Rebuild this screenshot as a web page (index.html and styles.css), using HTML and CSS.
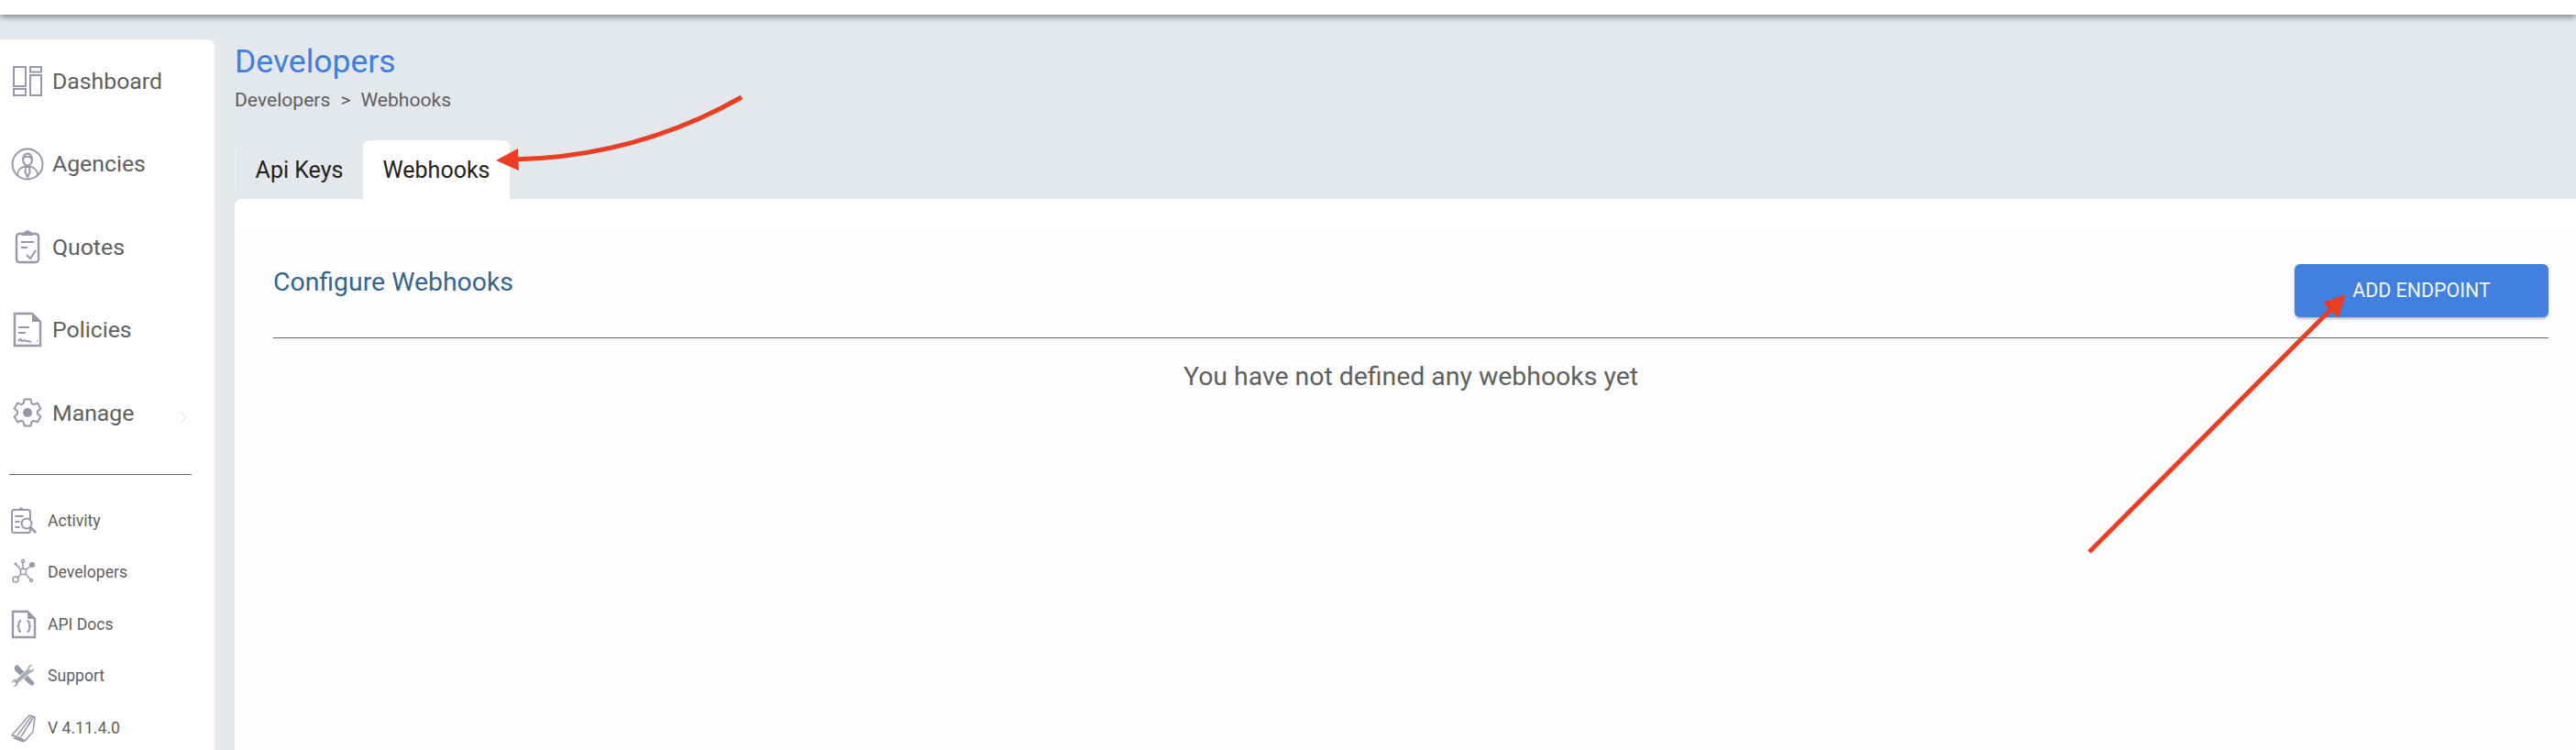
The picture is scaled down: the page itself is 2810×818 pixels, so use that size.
FILE: index.html
```html
<!DOCTYPE html>
<html lang="en">
<head>
    <meta charset="UTF-8">
    <title>Developers - Webhooks</title>
    <link rel="stylesheet" href="styles.css">
</head>
<body>
    <div class="topbar"></div>
    <div class="shell">
        <div class="sidebar">
            <a class="nav-item" href="javascript:;">
                <svg class="icon" viewBox="0 0 32 36"><rect x="1" y="3" width="13" height="21"/><rect x="1" y="27" width="13" height="7"/><rect x="19" y="3" width="12" height="5.500"/><rect x="19" y="12" width="12" height="22"/></svg>
                <span>Dashboard</span>
            </a>
            <a class="nav-item" href="javascript:;">
                <svg class="icon" viewBox="0 0 32 36"><circle cx="16" cy="18" r="16.500"/><ellipse cx="16" cy="13" rx="5" ry="6.500"/><path d="M11 12c2-3 7-3 10 0M5 30c0-6 3-8 8-9.500M27 30c0-6-3-8-8-9.500M14 21l-.5 6 2.500 5 2.500-5-.5-6z"/></svg>
                <span>Agencies</span>
            </a>
            <a class="nav-item" href="javascript:;">
                <svg class="icon" viewBox="0 0 32 36"><rect x="4" y="4" width="24" height="31" rx="3" stroke-width="2.400"/><path class="solid" d="M10 6V4c0-1 1-2 3-2 .5-2.500 5.500-2.500 6 0 2 0 3 1 3 2v2z"/><path d="M9 13h14M9 19h7M15 27l4 4 6-9"/></svg>
                <span>Quotes</span>
            </a>
            <a class="nav-item" href="javascript:;">
                <svg class="icon" viewBox="0 0 32 36"><path d="M2 0h19l9 9v26H2z" stroke-width="2.400"/><path class="solid" d="M21 0l9 9h-9z"/><path d="M6 15h12M6 21h8M6 30l2-2 2 2 2-1 2 1 2 0 4 1M26 30h1"/></svg>
                <span>Policies</span>
            </a>
            <a class="nav-item" href="javascript:;">
                <svg class="icon" viewBox="0 0 32 32"><polygon points="11.500,5.900 12.600,1.400 19.400,1.400 20.500,5.900 22.500,7.100 27,5.800 30.300,11.600 26.900,14.800 26.900,17.200 30.300,20.400 27,26.200 22.500,24.900 20.500,26.100 19.400,30.600 12.600,30.600 11.500,26.100 9.500,24.900 5,26.200 1.700,20.400 5.100,17.200 5.100,14.800 1.700,11.600 5,5.800 9.500,7.100"/><circle class="solid" cx="16" cy="16" r="5"/></svg>
                <span>Manage</span>
                <svg class="chevron" viewBox="0 0 10 14"><path d="M2 1l6 6-6 6"/></svg>
            </a>

            <div class="divider"></div>

            <a class="sub-item" href="javascript:;">
                <svg class="icon" viewBox="0 0 28 30"><rect x="1" y="3" width="20" height="25" rx="2.500"/><path class="solid" d="M7 4V3c0-1 1-1.500 2.500-1.500C10 0 12 0 12.500 1.500 14 1.500 15 2 15 3v1z"/><path d="M4.500 10h9M4.500 16h5M4.500 22h5"/><circle class="lens" cx="17" cy="18" r="5.500"/><path d="M21 22l6 6" stroke-width="2.500"/></svg>
                <span>Activity</span>
            </a>
            <a class="sub-item" href="javascript:;">
                <svg class="icon thin" viewBox="0 0 28 30"><rect x="10.500" y="11.500" width="6" height="6" rx="1.500"/><path d="M13 11V4M10.500 12L5 6M16.500 12L22 8M10.500 17.500L7 21M16.500 17.500L21 23"/><circle cx="13" cy="3" r="1.500"/><circle class="solid" cx="5" cy="6" r="1.500"/><circle class="solid" cx="23" cy="7" r="3"/><circle cx="5" cy="23" r="3"/><circle cx="22" cy="24" r="1.500"/></svg>
                <span>Developers</span>
            </a>
            <a class="sub-item" href="javascript:;">
                <svg class="icon" viewBox="0 0 28 30"><path d="M2 1h16l8 8v20H2z" stroke-width="2.400"/><path class="solid" d="M18 1l8 8h-8z"/><path d="M11 11c-2.500 0-2.500 1.500-2.500 3.500s0 2.500-2 2.500c2 0 2 .5 2 2.500s0 3.500 2.500 3.500M17.500 11c2.500 0 2.500 1.500 2.500 3.500s0 2.500 2 2.500c-2 0-2 .5-2 2.500s0 3.500-2.500 3.500"/></svg>
                <span>API Docs</span>
            </a>
            <a class="sub-item" href="javascript:;">
                <svg class="icon" viewBox="0 0 28 30"><path class="solid" d="M4 5l3-2 17 18c1.500 1.500 1.500 3 .5 4-1 1-3 1-4-.5L4 9z"/><path class="tool" d="M24 3l-4 4 1.500 2 3.500-3c1 3-1 6-4 6L8 23c0 3-3 5-6 4l3-3-1.500-2.500-3 2.500c-.5-3 2-6 5.500-5.500L18 7.500C18 4 21 2 24 3z"/></svg>
                <span>Support</span>
            </a>
            <a class="sub-item" href="javascript:;">
                <svg class="icon thin" viewBox="0 0 28 30"><path d="M20 1L1 23l14 6 9-10 2-16zM22.500 2L7 23M24.500 3L11 24.500M1 23c5 1 10 3 14 6M3 26l11 4"/></svg>
                <span>V 4.11.4.0</span>
            </a>
        </div>

        <div class="main">
            <h1 class="title">Developers</h1>
            <div class="crumbs">Developers<span class="sep">&gt;</span>Webhooks</div>
            <div class="tabs">
                <a class="tab" href="javascript:;">Api Keys</a>
                <a class="tab active" href="javascript:;">Webhooks</a>
            </div>
            <div class="card">
                <div class="card-inner">
                    <div class="card-head">
                        <h2>Configure Webhooks</h2>
                        <a class="btn" href="javascript:;">ADD ENDPOINT</a>
                    </div>
                    <p class="empty">You have not defined any webhooks yet</p>
                </div>
            </div>
        </div>
    </div>

    <!-- annotation arrows drawn on top of the screenshot -->
    <svg class="arrows" viewBox="0 0 2810 818">
        <path d="M809 106C740 145 660 172 560 174"/>
        <polygon points="541,175 565,162 566,186"/>
        <path d="M2279 602L2545 335"/>
        <polygon points="2559,321 2534,330 2551,347"/>
    </svg>
</body>
</html>
```

FILE: styles.css
```css
* {
    margin: 0;
    padding: 0;
    box-sizing: border-box;
}
html, body {
    height: 818px;
    overflow: hidden;
}
body {
    background: #e4e7ec;
    font-family: Roboto, "Liberation Sans", sans-serif;
    color: #606060;
}
a {
    color: inherit;
    text-decoration: none;
}
.topbar {
    height: 16px;
    background: #fff;
    box-shadow: 0 2px 7px rgba(0,0,0,0.5);
    position: relative;
}
.shell {
    display: flex;
    height: 802px;
}

/* sidebar */
.sidebar {
    width: 234px;
    margin-top: 27px;
    background: #fff;
    border-top-right-radius: 8px;
    flex-shrink: 0;
}
.nav-item {
    display: flex;
    align-items: center;
    height: 90.5px;
    padding-left: 14px;
    font-size: 24.8px;
    position: relative;
}
.nav-item .icon {
    width: 32px;
    height: 36px;
    margin-right: 11px;
    flex-shrink: 0;
}
.icon {
    fill: none;
    stroke: #9698ac;
    stroke-width: 2;
    overflow: visible;
}
.icon.thin {
    stroke-width: 1.5;
}
.icon .solid {
    fill: #9698ac;
    stroke: none;
}
.icon .tool {
    fill: #a9abbb;
    stroke: #fff;
    stroke-width: 0.8;
}
.icon .lens {
    fill: #fff;
}
.chevron {
    position: absolute;
    left: 195px;
    top: 43px;
    width: 10px;
    height: 14px;
    fill: none;
    stroke: #efefef;
    stroke-width: 2;
}
.divider {
    height: 1px;
    margin: 21px 25px 22px 10px;
    background: #666;
}
.sub-item {
    display: flex;
    align-items: center;
    height: 56.5px;
    padding-left: 12px;
    font-size: 17.6px;
}
.sub-item .icon {
    width: 28px;
    height: 30px;
    margin-right: 12px;
    flex-shrink: 0;
}

/* main */
.main {
    flex: 1;
    min-width: 0;
    margin-left: 22px;
    padding-top: 31px;
    display: flex;
    flex-direction: column;
}
.title {
    font-size: 35.5px;
    line-height: 40px;
    font-weight: 400;
    color: #3f7fdd;
}
.crumbs {
    margin-top: 9px;
    font-size: 21.1px;
    line-height: 26px;
}
.crumbs .sep {
    margin: 0 11px;
}
.tabs {
    display: flex;
    margin-top: 31px;
    height: 64px;
}
.tab {
    display: flex;
    align-items: center;
    justify-content: center;
    font-size: 25px;
    color: #222;
}
.tab:first-child {
    width: 140px;
    height: 42px;
    margin-top: 11px;
    border-left: 1px solid #f3f4f7;
}
.tab.active {
    width: 160px;
    background: #fff;
    border-radius: 8px 8px 0 0;
}
.card {
    flex: 1;
    padding-top: 28px;
    background: #fff;
    border-top-left-radius: 8px;
}
.card-inner {
    height: 100%;
    padding: 43px 30px 0 42px;
    background: #fdfdfd;
    border-top-left-radius: 8px;
}
.card-head {
    display: flex;
    justify-content: space-between;
    align-items: flex-start;
    padding-bottom: 22px;
    border-bottom: 1px solid #666;
}
.card-head h2 {
    font-size: 28.4px;
    line-height: 40px;
    font-weight: 400;
    color: #336590;
}
.btn {
    width: 277px;
    height: 58px;
    line-height: 58px;
    text-align: center;
    background: #4180de;
    color: #f4f7fd;
    font-size: 21.4px;
    border-radius: 6px;
    box-shadow: 0 2px 3px rgba(0,0,0,0.25);
}
.empty {
    margin-top: 24px;
    font-size: 28.4px;
    line-height: 36px;
    text-align: center;
}

/* arrows */
.arrows {
    position: absolute;
    left: 0;
    top: 0;
    width: 2810px;
    height: 818px;
    pointer-events: none;
}
.arrows path {
    fill: none;
    stroke: #e93e24;
    stroke-width: 5;
}
.arrows polygon {
    fill: #e93e24;
}
```
